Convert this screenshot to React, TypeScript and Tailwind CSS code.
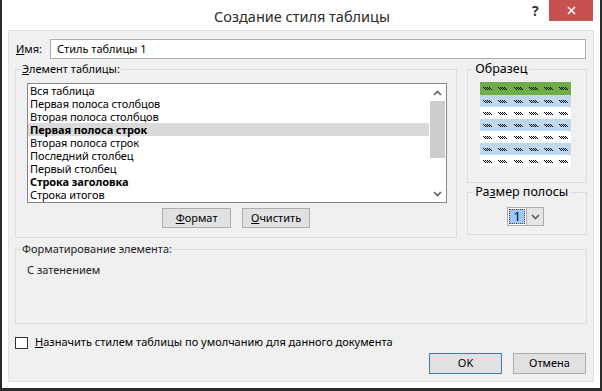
import React from "react";

const rows = [
  { t: "Вся таблица", b: false },
  { t: "Первая полоса столбцов", b: false },
  { t: "Вторая полоса столбцов", b: false },
  { t: "Первая полоса строк", b: true, sel: true },
  { t: "Вторая полоса строк", b: false },
  { t: "Последний столбец", b: false },
  { t: "Первый столбец", b: false },
  { t: "Строка заголовка", b: true },
  { t: "Строка итогов", b: false },
];

function Glyph() {
  const cells: React.ReactNode[] = [];
  for (let y = 0; y < 3; y++) {
    for (let x = 0; x < 9; x++) {
      if ((x + y) % 2 === 0 && x >= y && x <= y + 6) {
        cells.push(<rect key={`${x}-${y}`} x={x} y={y} width={1} height={1} fill="#000" />);
      }
    }
  }
  return (
    <svg width="9" height="3" viewBox="0 0 9 3" shapeRendering="crispEdges">
      {cells}
    </svg>
  );
}

function PreviewRow({ bg, h }: { bg: string; h: string }) {
  return (
    <div className={`grid grid-cols-6 items-center ${bg} ${h}`}>
      {[0, 1, 2, 3, 4, 5].map((i) => (
        <div key={i} className="flex justify-center">
          <Glyph />
        </div>
      ))}
    </div>
  );
}

function Chevron({ up }: { up?: boolean }) {
  return (
    <svg width="9" height="6" viewBox="0 0 9 6">
      {up ? (
        <path d="M1 5 L4.5 1.5 L8 5" stroke="#606060" strokeWidth="1.6" fill="none" />
      ) : (
        <path d="M1 1 L4.5 4.5 L8 1" stroke="#606060" strokeWidth="1.6" fill="none" />
      )}
    </svg>
  );
}

export default function App() {
  return (
    <div className="w-[602px] h-[391px] bg-white border-l-2 border-r-2 border-b-[3px] border-[#2b2b2b] flex flex-col font-['Noto_Sans',sans-serif] text-black text-[11px]">
      {/* Title bar */}
      <div className="relative h-[30px] flex items-center justify-center shrink-0">
        <span className="text-[14.5px] text-[#2b2b2b] leading-none mt-[2px] ml-[2px]">Создание стиля таблицы</span>
        <span className="absolute left-[530px] top-[4px] text-[14px] font-bold text-[#333] leading-none">?</span>
        <div className="absolute left-[547px] top-0 w-[44px] h-[21px] bg-[#c75050] flex items-center justify-center">
          <svg width="9" height="9" viewBox="0 0 9 9">
            <path d="M1 1 L8 8 M8 1 L1 8" stroke="#fff" strokeWidth="1.6" />
          </svg>
        </div>
      </div>

      {/* Gray panel */}
      <div className="mx-[6px] h-[352px] bg-[#f0f0f0] border border-[#e3e3e3] flex flex-col px-[6px] shrink-0">
        {/* Name */}
        <div className="flex items-center mt-[8px] h-[20px]">
          <div className="w-[35px] pl-[1px]">
            <u>И</u>мя:
          </div>
          <div className="flex-1 mr-[1px] h-[20px] bg-white border border-[#abadb3] flex items-center pl-[6px]">
            Стиль таблицы 1
          </div>
        </div>

        {/* Main row */}
        <div className="flex mt-[3px] gap-[10px]">
          <fieldset className="w-[443px] h-[176px] border border-[#dcdcdc] flex flex-col">
            <legend className="ml-[5px] px-[1px] leading-[14px]">
              <u>Э</u>лемент таблицы:
            </legend>
            <div className="ml-[11px] mt-[7px] w-[420px] h-[120px] border border-[#828790] bg-white flex">
              <div className="flex-1 flex flex-col">
                {rows.map((r) => (
                  <div
                    key={r.t}
                    className={`h-[13px] leading-[13px] pl-[2px] tracking-[-0.1px] ${r.b ? "font-bold" : ""} ${r.sel ? "bg-[#dadada]" : ""}`}
                  >
                    {r.t}
                  </div>
                ))}
              </div>
              <div className="w-[17px] flex flex-col">
                <div className="h-[17px] flex items-center justify-center">
                  <Chevron up />
                </div>
                <div className="h-[57px] bg-[#cdcdcd] mx-[1px]" />
                <div className="flex-1" />
                <div className="h-[17px] flex items-center justify-center">
                  <Chevron />
                </div>
              </div>
            </div>
            <div className="flex justify-center gap-[11px] mt-[5px]">
              <div className="w-[69px] h-[20px] bg-[#e1e1e1] border border-[#adadad] flex items-center justify-center">
                <span><u>Ф</u>ормат</span>
              </div>
              <div className="w-[68px] h-[20px] bg-[#e1e1e1] border border-[#adadad] flex items-center justify-center">
                <span><u>О</u>чистить</span>
              </div>
            </div>
          </fieldset>

          <div className="flex flex-col w-[120px]">
            <fieldset className="h-[121px] border border-[#dcdcdc] flex flex-col">
              <legend className="ml-[5px] px-[2px] text-[12.5px] leading-[14px]">Образец</legend>
              <div className="ml-[12px] mt-[6px] w-[91px] flex flex-col">
                <PreviewRow bg="bg-[#70ad47]" h="h-[13px]" />
                <PreviewRow bg="bg-[#bdd7ee]" h="h-[12px]" />
                <PreviewRow bg="bg-white" h="h-[12px]" />
                <PreviewRow bg="bg-[#bdd7ee]" h="h-[12px]" />
                <PreviewRow bg="bg-white" h="h-[12px]" />
                <PreviewRow bg="bg-[#bdd7ee]" h="h-[12px]" />
                <PreviewRow bg="bg-white" h="h-[12px]" />
              </div>
            </fieldset>
            <fieldset className="mt-[2px] h-[50px] border border-[#dcdcdc] flex flex-col">
              <legend className="ml-[5px] px-[2px] text-[12.5px] leading-[14px]">
                Ра<u>з</u>мер полосы
              </legend>
              <div className="ml-[39px] mt-[8px] w-[37px] h-[19px] border border-[#acacac] bg-white flex">
                <div className="w-[16px] m-[1px] bg-[#99c9ff] border border-dotted border-[#7a3b16] flex items-center justify-center text-[13px] leading-none">
                  1
                </div>
                <div className="flex-1 bg-[#e5e5e5] border-l border-[#acacac] flex items-center justify-center">
                  <Chevron />
                </div>
              </div>
            </fieldset>
          </div>
        </div>

        {/* Formatting */}
        <fieldset className="mt-[4px] h-[82px] border border-[#dcdcdc] flex flex-col">
          <legend className="ml-[5px] px-[1px] leading-[14px] text-[#222]">Форматирование элемента:</legend>
          <div className="ml-[11px] mt-[6px] text-[#222]">С затенением</div>
        </fieldset>

        {/* Checkbox */}
        <div className="flex items-center mt-[12px] h-[13px]">
          <div className="w-[13px] h-[12px] border border-[#333] bg-white" />
          <span className="ml-[7px]">
            <u>Н</u>азначить стилем таблицы по умолчанию для данного документа
          </span>
        </div>

        {/* Buttons */}
        <div className="flex justify-end gap-[11px] mt-[4px] pr-[1px]">
          <div className="w-[73px] h-[21px] bg-[#e1e1e1] border border-[#3c7fb1] flex items-center justify-center">OK</div>
          <div className="w-[73px] h-[21px] bg-[#e1e1e1] border border-[#adadad] flex items-center justify-center">Отмена</div>
        </div>
      </div>
    </div>
  );
}
